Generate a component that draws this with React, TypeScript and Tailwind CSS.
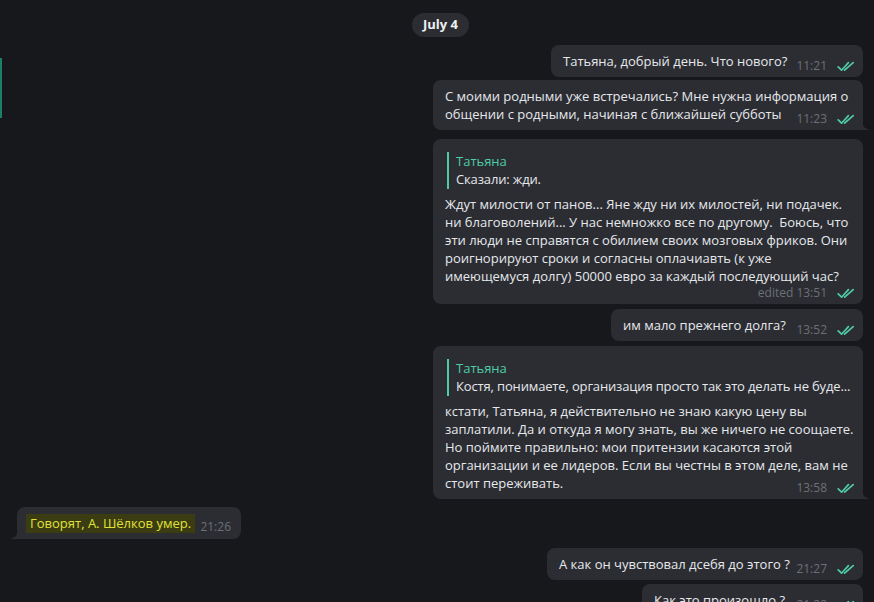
import React from 'react';

type Reply = { name: string; text: string };

type Msg = {
  lines: string[];
  time: string;
  edited?: boolean;
  reply?: Reply;
  width: number;
  mt: string;
  tail?: boolean;
  timeOwnLine?: boolean;
};

function DoubleCheck() {
  return (
    <svg width="18" height="11" viewBox="0 0 18 11" fill="none" className="text-[#4fcca4]">
      <path d="M1.2 5.8 L4.6 9.2 L11.4 1.6" stroke="currentColor" strokeWidth="1.7" strokeLinecap="round" strokeLinejoin="round" />
      <path d="M7.6 9.2 L16.2 1.6" stroke="currentColor" strokeWidth="1.7" strokeLinecap="round" strokeLinejoin="round" />
    </svg>
  );
}

const messages: Msg[] = [
  { lines: ['Татьяна, добрый день. Что нового?'], time: '11:21', width: 312, mt: 'mt-[8px]' },
  {
    lines: ['С моими родными уже встречались? Мне нужна информация о', 'общении с родными, начиная с ближайшей субботы'],
    time: '11:23',
    width: 430,
    mt: 'mt-[3px]',
    tail: true,
  },
  {
    reply: { name: 'Татьяна', text: 'Сказали: жди.' },
    lines: [
      'Ждут милости от панов... Яне жду ни их милостей, ни подачек.',
      'ни благоволений... У нас немножко все по другому.  Боюсь, что',
      'эти люди не справятся с обилием своих мозговых фриков. Они',
      'роигнорируют сроки и согласны оплачиавть (к уже',
      'имеющемуся долгу) 50000 евро за каждый последующий час?',
    ],
    time: '13:51',
    edited: true,
    width: 430,
    mt: 'mt-[9px]',
    timeOwnLine: true,
  },
  { lines: ['им мало прежнего долга?'], time: '13:52', width: 252, mt: 'mt-[5px]' },
  {
    reply: { name: 'Татьяна', text: 'Костя, понимаете, организация просто так это делать не буде...' },
    lines: [
      'кстати, Татьяна, я действительно не знаю какую цену вы',
      'заплатили. Да и откуда я могу знать, вы же ничего не соощаете.',
      'Но поймите правильно: мои притензии касаются этой',
      'организации и ее лидеров. Если вы честны в этом деле, вам не',
      'стоит переживать.',
    ],
    time: '13:58',
    width: 430,
    mt: 'mt-[5px]',
    tail: true,
  },
];

function OutBubble({ m }: { m: Msg }) {
  return (
    <div className={`flex justify-end ${m.mt}`}>
      <div
        className={`relative bg-[#2b2d33] pl-[12px] pr-[8px] pt-[7px] pb-[7px] text-[13px] leading-[18px] text-[#e6e8eb] ${m.tail ? 'rounded-lg rounded-br-none' : 'rounded-lg'}`}
        style={{ width: m.width }}
      >
        {m.reply && (
          <div className="mt-[6px] mb-[6px] flex">
            <div className="ml-[2px] mr-[7px] w-[2px] shrink-0 bg-[#4fcca4]" />
            <div className="min-w-0 flex-1">
              <div className="text-[#4fcca4] leading-[18px]">{m.reply.name}</div>
              <div className="whitespace-nowrap leading-[19px] tracking-[-0.15px]">{m.reply.text}</div>
            </div>
          </div>
        )}
        {m.lines.map((l, i) => (
          <div key={i} className="whitespace-pre">
            {l}
            {i === m.lines.length - 1 && !m.timeOwnLine && <span className="inline-block w-[70px]" />}
          </div>
        ))}
        {m.timeOwnLine && <div className="h-[12px]" />}
        <div className="absolute right-[8px] bottom-[3px] flex items-center gap-[10px] text-[12px] leading-[16px] text-[#6c7076]">
          <span>{m.edited ? `edited ${m.time}` : m.time}</span>
          <DoubleCheck />
        </div>
        {m.tail && (
          <svg width="8" height="10" viewBox="0 0 8 10" className="absolute -right-[7px] bottom-0">
            <path d="M0 0 C0 6 3 9 8 10 L0 10 Z" fill="#2b2d33" />
          </svg>
        )}
      </div>
    </div>
  );
}

export default function App() {
  return (
    <div className="relative flex h-[602px] w-[874px] overflow-hidden bg-[#17181c] font-['Open_Sans',sans-serif]">
      <div className="mt-[58px] h-[60px] w-[2px] shrink-0 bg-[#1d7f68]" />
      <div className="flex flex-1 flex-col pr-[11px]">
        <div className="mt-[13px] flex justify-center pl-[16px]">
          <div className="flex h-[24px] items-center rounded-full bg-[#2b2d33] px-[11px] text-[13px] font-bold text-[#eef0f2]">
            July 4
          </div>
        </div>

        {messages.map((m, i) => (
          <OutBubble key={i} m={m} />
        ))}

        <div className="mt-[8px] flex pl-[15px]">
          <div className="relative flex h-[32px] w-[224px] items-center rounded-lg rounded-bl-none bg-[#2b2d33] pl-[9px] pr-[10px] text-[13px]">
            <span className="bg-[#3b3c12] px-[4px] py-[1px] leading-[17px] text-[#e0e23a]">Говорят, А. Шёлков умер.</span>
            <span className="ml-auto mt-[7px] text-[12px] text-[#6c7076]">21:26</span>
            <svg width="8" height="10" viewBox="0 0 8 10" className="absolute -left-[7px] bottom-0">
              <path d="M8 0 C8 6 5 9 0 10 L8 10 Z" fill="#2b2d33" />
            </svg>
          </div>
        </div>

        <OutBubble m={{ lines: ['А как он чувствовал дсебя до этого ?'], time: '21:27', width: 316, mt: 'mt-[9px]' }} />
        <OutBubble m={{ lines: ['Как это произошло ?'], time: '21:28', width: 221, mt: 'mt-[4px]' }} />
      </div>
    </div>
  );
}
